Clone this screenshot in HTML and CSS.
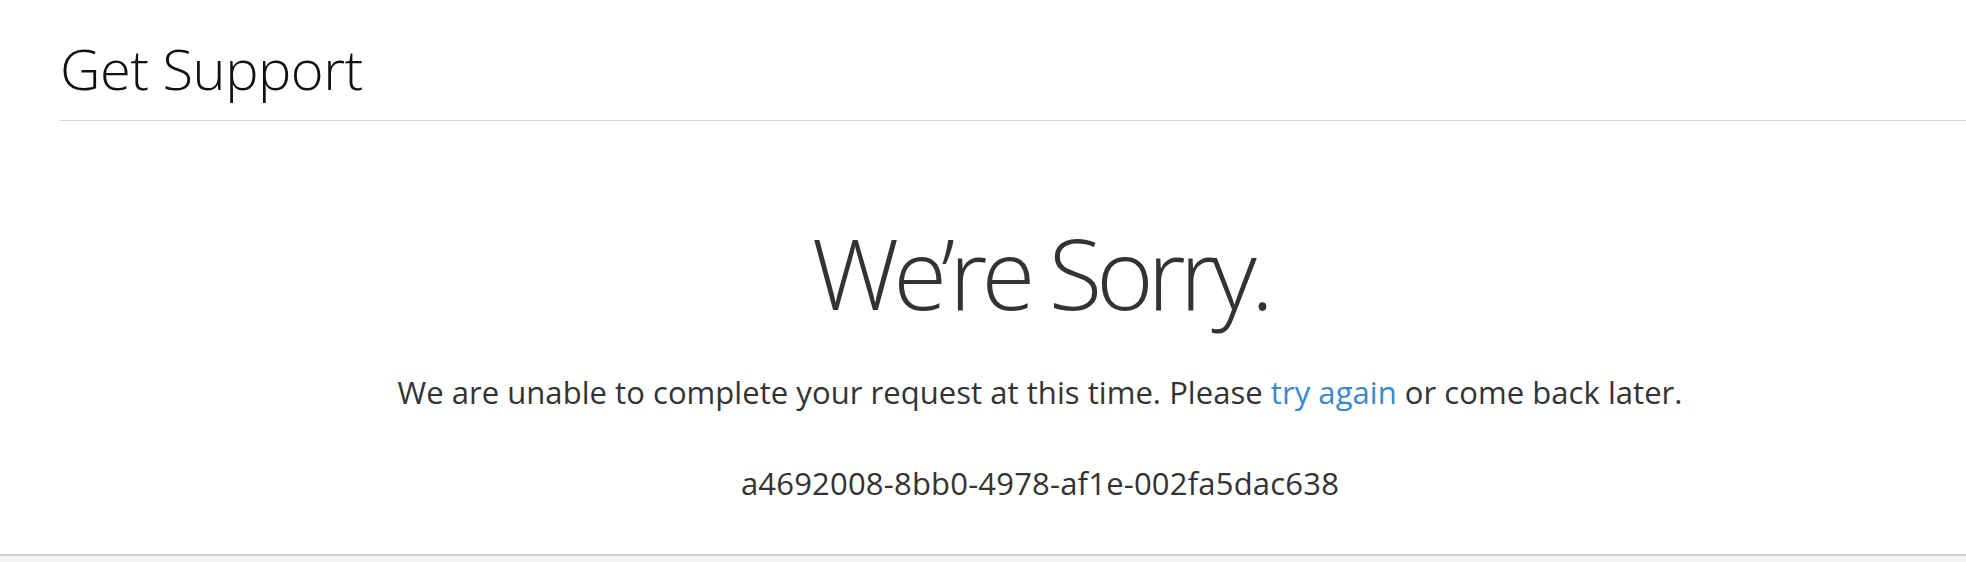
FILE: index.html
```html
<!DOCTYPE html>
<html lang="en">
<head>
<meta charset="utf-8">
<title>Get Support</title>
<link rel="stylesheet" href="styles.css">
</head>
<body>
<div class="page">
  <header class="header">
    <h1 class="header-title">Get Support</h1>
  </header>
  <main class="main">
    <h2 class="sorry">We’re Sorry.</h2>
    <p class="message">We are unable to complete your request at this time. Please <a class="link" href="#">try again</a> or come back later.</p>
    <p class="code">a4692008-8bb0-4978-af1e-002fa5dac638</p>
  </main>
  <footer class="footer"></footer>
</div>
</body>
</html>
```

FILE: styles.css
```css
html, body {
  margin: 0;
  padding: 0;
  background: #ffffff;
}
body {
  font-family: "Open Sans", "Noto Sans", sans-serif;
  color: #333333;
}
.page {
  display: flex;
  flex-direction: column;
  height: 562px;
  overflow: hidden;
}
.header {
  margin-left: 60px;
  padding-top: 40px;
  padding-bottom: 24px;
  border-bottom: 1px solid #d6d6d6;
}
.header-title {
  margin: 0;
  font-size: 56px;
  line-height: 1;
  font-weight: 300;
  letter-spacing: -0.5px;
  color: #111111;
}
.main {
  flex: 1;
  display: flex;
  flex-direction: column;
  align-items: center;
  padding-top: 102px;
  padding-left: 114px;
}
.sorry {
  margin: 0;
  font-size: 98px;
  line-height: 1;
  font-weight: 300;
  letter-spacing: -6px;
  color: #333333;
}
.message {
  margin: 56px 0 0;
  font-size: 31px;
  line-height: 1;
  font-weight: 400;
  letter-spacing: 0.05px;
}
.link {
  color: #3a89cd;
  text-decoration: none;
}
.code {
  margin: 60px 0 0;
  font-size: 31px;
  line-height: 1;
  font-weight: 400;
  letter-spacing: 0.2px;
}
.footer {
  height: 6px;
  border-top: 2px solid #d2d2d2;
  background: #f2f2f2;
}
```
